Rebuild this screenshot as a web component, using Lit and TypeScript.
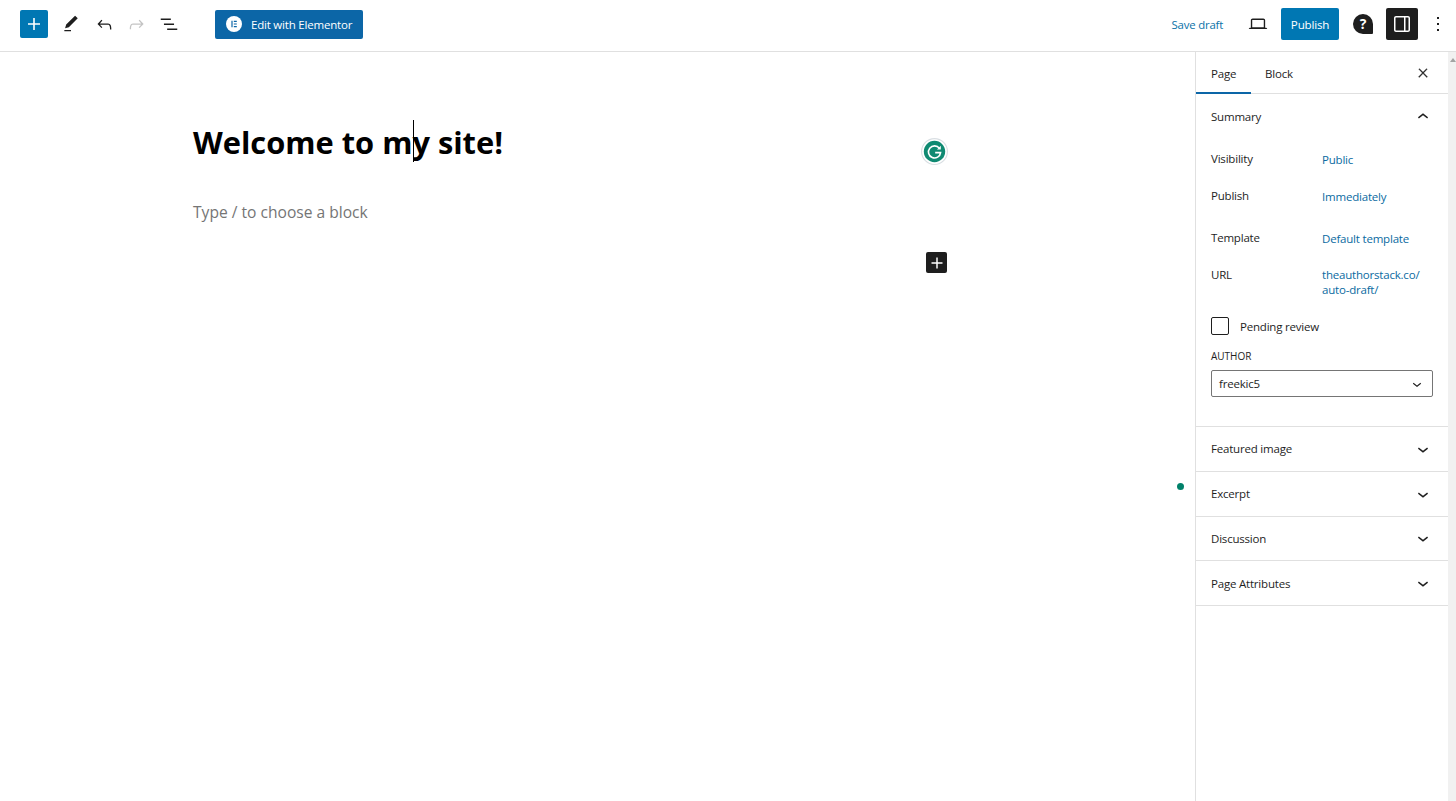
import { LitElement, css, html, svg } from 'lit'
import { customElement } from 'lit/decorators.js'

const paths = {
   plus: 'M18 11.2h-5.2V6h-1.6v5.2H6v1.6h5.2V18h1.6v-5.2H18z',
   pencil: 'M20.1 5.1L16.9 2 6.2 12.7l-1.3 4.4 4.5-1.3L20.1 5.1zM4 20.8h8v-1.5H4v1.5z',
   undo: 'M18.3 11.7c-.6-.6-1.4-.9-2.3-.9H6.7l2.9-3.3-1.1-1-4.5 5L8.5 16l1-1-2.7-2.7H16c.5 0 .9.2 1.3.5 1 1 1 3.4 1 4.5v.3h1.5v-.2c0-1.5 0-4.3-1.5-5.7z',
   redo: 'M15.6 6.5l-1.1 1 2.9 3.3H8c-.9 0-1.7.3-2.3.9-1.4 1.5-1.4 4.2-1.4 5.6v.2h1.5v-.3c0-1.1 0-3.5 1-4.5.3-.3.7-.5 1.3-.5h9.2L14.5 15l1.1 1.1 4.6-4.6-4.6-5z',
   outline: 'M3 6h11v1.5H3V6Zm3.5 5.5h11V13h-11v-1.5ZM21 17H10v1.5h11V17Z',
   laptop: 'M20.5 16h-.7V8c0-1.1-.9-2-2-2H6.2c-1.1 0-2 .9-2 2v8h-.7c-.8 0-1.5.7-1.5 1.5h20c0-.8-.7-1.5-1.5-1.5zM5.7 8c0-.3.2-.5.5-.5h11.6c.3 0 .5.2.5.5v7.6H5.7V8z',
   drawer: 'M18 4H6c-1.1 0-2 .9-2 2v12c0 1.1.9 2 2 2h12c1.1 0 2-.9 2-2V6c0-1.1-.9-2-2-2zm-4 14.5H6c-.3 0-.5-.2-.5-.5V6c0-.3.2-.5.5-.5h8v13zm4.5-.5c0 .3-.2.5-.5.5h-2.5v-13H18c.3 0 .5.2.5.5v12z',
   more: 'M13 19h-2v-2h2v2zm0-6h-2v-2h2v2zm0-6h-2V5h2v2z',
   close: 'M13 11.8l6.1-6.3-1-1-6.1 6.2-6.1-6.2-1 1 6.1 6.3-6.5 6.7 1 1 6.5-6.6 6.5 6.6 1-1z',
   up: 'M6.5 12.4L12 8l5.5 4.4-.9 1.2L12 10l-4.5 3.6-1-1.2z',
   down: 'M17.5 11.6L12 16l-5.5-4.4.9-1.2L12 14l4.5-3.6 1 1.2z',
}

const icon = (name: keyof typeof paths, size = 24) => html`
   <svg width=${size} height=${size} viewBox="0 0 24 24" fill="currentColor" fill-rule="evenodd">${svg`<path d=${paths[name]}></path>`}</svg>`

const panels = ['Featured image', 'Excerpt', 'Discussion', 'Page Attributes']

@customElement('app-root')
export class AppRoot extends LitElement {
   render() {
      return html`
         <header class="topbar">
            <div class="tools">
               <button class="add">${icon('plus')}</button>
               <span class="tool first">${icon('pencil', 20)}</span>
               <span class="tool">${icon('undo', 21)}</span>
               <span class="tool off">${icon('redo', 21)}</span>
               <span class="tool">${icon('outline', 22)}</span>
               <button class="elementor">
                  <svg width="16" height="16" viewBox="0 0 16 16">
                     <circle cx="8" cy="8" r="8" fill="#fff"></circle>
                     <path d="M5.4 4.8h1.2v6.4H5.4zM7.8 4.8h3v1.2h-3zM7.8 7.4h3v1.2h-3zM7.8 10h3v1.2h-3z" fill="#0c66a7"></path>
                  </svg>
                  <span>Edit with Elementor</span>
               </button>
            </div>
            <div class="actions">
               <span class="save">Save draft</span>
               <span class="laptop">${icon('laptop', 22)}</span>
               <button class="publish">Publish</button>
               <span class="help">
                  <svg width="22" height="22" viewBox="0 0 22 22">
                     <path d="M11 1a10 10 0 1 0 0 20h9a1 1 0 0 0 1-1v-9A10 10 0 0 0 11 1z" fill="#1e1e1e"></path>
                  </svg>
                  <b>?</b>
               </span>
               <span class="drawer">${icon('drawer')}</span>
               <span class="more">${icon('more')}</span>
            </div>
         </header>
         <div class="body">
            <main class="canvas">
               <h1>Welcome to m<span class="caret"></span>y site!</h1>
               <p class="hint">Type / to choose a block</p>
               <span class="grammarly">
                  <svg width="27" height="27" viewBox="0 0 24 24">
                     <circle cx="12" cy="12" r="11.5" fill="#fff" stroke="#d9dfe3"></circle>
                     <circle cx="12" cy="12" r="9.5" fill="#0f8a72"></circle>
                     <path d="M16.4 9.2A5.4 5.4 0 1 0 17.4 13H12.6" fill="none" stroke="#fff" stroke-width="1.4"></path>
                     <path d="M17.6 6.8v3.4h-3.4z" fill="#fff"></path>
                  </svg>
               </span>
               <span class="inserter">${icon('plus', 22)}</span>
               <span class="dot"></span>
            </main>
            <aside class="sidebar">
               <div class="tabs">
                  <span class="tab on">Page</span>
                  <span class="tab">Block</span>
                  <span class="x">${icon('close', 14)}</span>
               </div>
               <section class="summary">
                  <div class="panel-head"><span>Summary</span>${icon('up', 22)}</div>
                  <div class="rows">
                     <div class="row"><span>Visibility</span><a>Public</a></div>
                     <div class="row spaced"><span>Publish</span><a>Immediately</a></div>
                     <div class="row"><span>Template</span><a>Default template</a></div>
                     <div class="row url"><span>URL</span><a>theauthorstack.co/<br />auto-draft/</a></div>
                  </div>
                  <label class="check"><i></i><span>Pending review</span></label>
                  <div class="author">AUTHOR</div>
                  <div class="select"><span>freekic5</span>${icon('down', 18)}</div>
               </section>
               ${panels.map(name => html`
                  <div class="panel-head closed"><span>${name}</span>${icon('down', 22)}</div>`)}
            </aside>
            <div class="scroll"><span></span></div>
         </div>`
   }

   static styles = css`
      :host {
         display: block;
         height: 801px;
         overflow: hidden;
         background: #fff;
         color: #1e1e1e;
         font-family: "Open Sans", "Noto Sans", sans-serif;
         font-size: 11.5px;
         letter-spacing: -0.2px;
      }

      svg {
         display: block;
         flex: none;
      }

      button {
         border: 0;
         padding: 0;
         font: inherit;
         letter-spacing: inherit;
         color: #fff;
      }

      .topbar {
         box-sizing: border-box;
         height: 52px;
         display: flex;
         align-items: center;
         justify-content: space-between;
         padding: 0 6px 3px 20px;
         border-bottom: 1px solid #e0e0e0;
      }

      .tools, .actions {
         display: flex;
         align-items: center;
      }

      .add {
         width: 28px;
         height: 28px;
         display: grid;
         place-items: center;
         background: #0077b3;
         border-radius: 2px;
      }

      .tool {
         width: 32.7px;
         display: grid;
         place-items: center;
      }

      .tool.first {
         margin-left: 7px;
      }

      .tool.off {
         color: #c4c4c4;
      }

      .elementor {
         width: 148px;
         height: 29px;
         margin-left: 29.2px;
         display: flex;
         align-items: center;
         gap: 9px;
         padding-left: 11px;
         box-sizing: border-box;
         background: #0c66a7;
         border-radius: 2px;
         font-size: 11.5px;
         white-space: nowrap;
      }

      .save {
         color: #0a72a8;
         font-size: 11.4px;
      }

      .laptop {
         margin-left: 24px;
      }

      .publish {
         width: 58px;
         height: 32px;
         margin-left: 12px;
         background: #0077b3;
         border-radius: 2px;
         font-size: 11.6px;
      }

      .help {
         position: relative;
         margin-left: 13px;
         color: #fff;
      }

      .help b {
         position: absolute;
         inset: 0;
         text-align: center;
         font-size: 14px;
         line-height: 22px;
      }

      .drawer {
         width: 32px;
         height: 32px;
         margin-left: 12px;
         display: grid;
         place-items: center;
         background: #1e1e1e;
         color: #fff;
         border-radius: 2px;
      }

      .more {
         margin-left: 8px;
      }

      .body {
         display: grid;
         grid-template-columns: 1fr 253px 8px;
         height: 749px;
      }

      .canvas {
         position: relative;
         padding: 62px 0 0 193px;
      }

      h1 {
         margin: 0;
         height: 56px;
         font-size: 30.8px;
         line-height: 56px;
         font-weight: 700;
         letter-spacing: 0;
         color: #000;
      }

      .caret {
         display: inline-block;
         width: 1px;
         height: 42px;
         margin: 0 -2px 0 1px;
         background: #000;
         vertical-align: -8px;
      }

      .hint {
         margin: 30px 0 0;
         font-size: 15.6px;
         line-height: 24px;
         letter-spacing: 0;
         color: #757575;
      }

      .grammarly {
         position: absolute;
         left: 921px;
         top: 86px;
      }

      .inserter {
         position: absolute;
         left: 926px;
         top: 200px;
         width: 21px;
         height: 21px;
         display: grid;
         place-items: center;
         background: #1e1e1e;
         color: #fff;
         border-radius: 2px;
      }

      .dot {
         position: absolute;
         left: 1177px;
         top: 431px;
         width: 7px;
         height: 7px;
         border-radius: 50%;
         background: #00816a;
      }

      .sidebar {
         border-left: 1px solid #e0e0e0;
      }

      .tabs {
         box-sizing: border-box;
         height: 42px;
         display: flex;
         align-items: stretch;
         border-bottom: 1px solid #e0e0e0;
      }

      .tab {
         padding: 0 14px;
         line-height: 43px;
         font-weight: 500;
      }

      .tab.on {
         width: 55px;
         box-sizing: border-box;
         padding: 0 15px;
         box-shadow: inset 0 -2px 0 #0c66a7;
         height: 42px;
      }

      .x {
         margin-left: auto;
         margin-right: 18px;
         align-self: center;
         stroke: currentColor;
         stroke-width: 0.8px;
      }

      .panel-head {
         box-sizing: border-box;
         height: 45px;
         display: flex;
         align-items: center;
         justify-content: space-between;
         padding: 0 14px 0 15px;
         font-weight: 500;
      }

      .closed {
         height: 44.75px;
         border-bottom: 1px solid #e0e0e0;
      }

      .summary {
         box-sizing: border-box;
         height: 333px;
         border-bottom: 1px solid #e0e0e0;
      }

      .rows {
         padding: 12px 0 0 15px;
      }

      .row {
         display: grid;
         grid-template-columns: 111px 1fr;
         height: 37px;
         line-height: 15px;
      }

      .row.spaced {
         height: 42px;
      }

      .row.url {
         height: 50px;
      }

      .row a {
         color: #0a6aa1;
         margin-top: 1px;
      }

      .row.url a {
         margin-top: 0;
      }

      .check {
         display: flex;
         align-items: center;
         gap: 11px;
         padding-left: 15px;
      }

      .check i {
         width: 16px;
         height: 16px;
         border: 1px solid #1e1e1e;
         border-radius: 2px;
      }

      .author {
         margin: 14px 0 0 15px;
         font-size: 10px;
         line-height: 14px;
         font-weight: 500;
         letter-spacing: 0;
      }

      .select {
         box-sizing: border-box;
         width: 222px;
         height: 27px;
         margin: 7px 0 0 15px;
         padding: 0 6px 0 7px;
         display: flex;
         align-items: center;
         justify-content: space-between;
         border: 1px solid #757575;
         border-radius: 2px;
      }

      .scroll {
         background: #f1f1f1;
         position: relative;
      }

      .scroll span {
         position: absolute;
         left: 2px;
         top: 6px;
         border: 3px solid transparent;
         border-top: 0;
         border-bottom: 4px solid #a3a3a3;
      }
   `
}
